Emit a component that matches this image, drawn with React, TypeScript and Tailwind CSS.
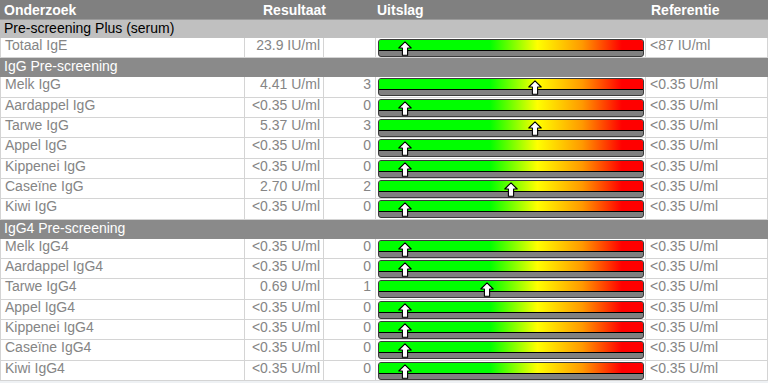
import React from 'react';

type Row = { name: string; value: string; score: string; pos: number; ref: string };
type Section = { title: string; light?: boolean; rows: Row[] };

const lt = '<0.35 U/ml';

const sections: Section[] = [
  {
    title: 'Pre-screening Plus (serum)',
    light: true,
    rows: [{ name: 'Totaal IgE', value: '23.9 IU/ml', score: '', pos: 27, ref: '<87 IU/ml' }],
  },
  {
    title: 'IgG Pre-screening',
    rows: [
      { name: 'Melk IgG', value: '4.41 U/ml', score: '3', pos: 157, ref: lt },
      { name: 'Aardappel IgG', value: lt, score: '0', pos: 27, ref: lt },
      { name: 'Tarwe IgG', value: '5.37 U/ml', score: '3', pos: 157, ref: lt },
      { name: 'Appel IgG', value: lt, score: '0', pos: 27, ref: lt },
      { name: 'Kippenei IgG', value: lt, score: '0', pos: 27, ref: lt },
      { name: 'Caseïne IgG', value: '2.70 U/ml', score: '2', pos: 133, ref: lt },
      { name: 'Kiwi IgG', value: lt, score: '0', pos: 27, ref: lt },
    ],
  },
  {
    title: 'IgG4 Pre-screening',
    rows: [
      { name: 'Melk IgG4', value: lt, score: '0', pos: 27, ref: lt },
      { name: 'Aardappel IgG4', value: lt, score: '0', pos: 27, ref: lt },
      { name: 'Tarwe IgG4', value: '0.69 U/ml', score: '1', pos: 109, ref: lt },
      { name: 'Appel IgG4', value: lt, score: '0', pos: 27, ref: lt },
      { name: 'Kippenei IgG4', value: lt, score: '0', pos: 27, ref: lt },
      { name: 'Caseïne IgG4', value: lt, score: '0', pos: 27, ref: lt },
      { name: 'Kiwi IgG4', value: lt, score: '0', pos: 27, ref: lt },
    ],
  },
];

const Arrow = () => (
  <svg width="14" height="15" viewBox="0 0 14 15">
    <path
      d="M7 0.8 L13.2 7 L9.6 7 L9.6 14.2 L4.4 14.2 L4.4 7 L0.8 7 Z"
      fill="#fff"
      stroke="#000"
      strokeWidth="1.1"
      strokeLinejoin="round"
    />
  </svg>
);

const Bar = ({ pos }: { pos: number }) => (
  <div className="relative h-[18px] w-[266px]">
    <div className="h-full rounded-[3px] border border-[#3a3a3a] bg-[#808080] overflow-hidden">
      <div className="h-[11px] border-b border-black bg-[linear-gradient(to_right,#00ff00_0%,#00ff00_42%,#ffff00_60%,#ff9900_77%,#ff0000_92%,#ff0000_100%)]" />
    </div>
    <div className="absolute top-[2px]" style={{ left: pos - 7 }}>
      <Arrow />
    </div>
  </div>
);

const DataRow = ({ row }: { row: Row }) => (
  <div className="flex h-[20.35px] text-[14px] leading-[15px] text-[#858585]">
    <div className="w-[245px] border border-t-0 border-[#d4d4d4] bg-white pl-[4px] truncate">{row.name}</div>
    <div className="w-[79px] border-b border-r border-[#d4d4d4] bg-white pr-[3px] text-right">{row.value}</div>
    <div className="w-[52px] border-b border-r border-[#d4d4d4] bg-white pr-[4px] text-right">{row.score}</div>
    <div className="w-[270px] border-b border-r border-[#d4d4d4] bg-white pl-[2px] pt-[1px]">
      <Bar pos={row.pos} />
    </div>
    <div className="flex-1 border-b border-r border-[#d4d4d4] bg-white pl-[4px]">{row.ref}</div>
  </div>
);

export default function App() {
  return (
    <div className="w-[768px] h-[383px] bg-[#eef1f4] font-['Liberation_Sans',Arial,sans-serif] overflow-hidden">
      {/* Header */}
      <div className="flex h-[19px] items-center bg-[#808080] text-[14px] leading-[16px] font-bold text-white">
        <div className="w-[263px] pl-[4px]">Onderzoek</div>
        <div className="w-[114px]">Resultaat</div>
        <div className="w-[274px]">Uitslag</div>
        <div className="flex-1">Referentie</div>
      </div>

      {sections.map((s) => (
        <div key={s.title}>
          <div
            className={
              s.light
                ? 'h-[19px] border-t border-[#9a9a9a] bg-[#c0c0c0] pl-[4px] text-[14px] leading-[16px] text-black'
                : 'h-[19px] bg-[#8a8a8a] pl-[4px] text-[14px] leading-[16px] text-white'
            }
          >
            {s.title}
          </div>
          {s.rows.map((r) => (
            <DataRow key={r.name} row={r} />
          ))}
        </div>
      ))}
    </div>
  );
}
